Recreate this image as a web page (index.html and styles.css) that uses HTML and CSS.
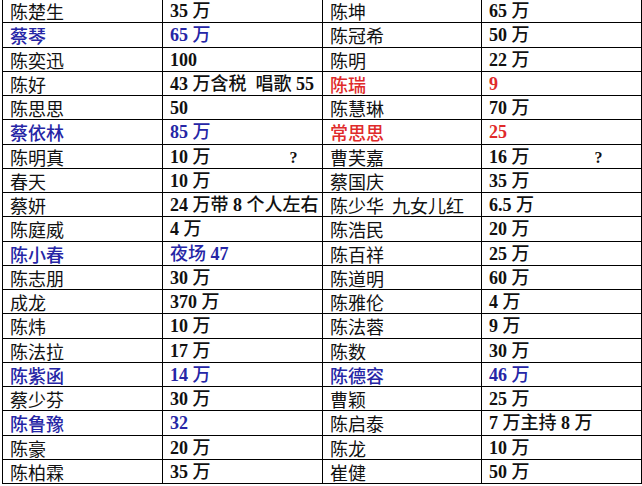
FILE: index.html
```html
<!DOCTYPE html>
<html lang="zh-CN">
<head>
<meta charset="utf-8">
<title>表</title>
<link rel="stylesheet" href="styles.css">
</head>
<body>
<div class="sheet">
  <div class="c n">陈楚生</div><div class="c v">35 <span class="h">万</span></div><div class="c n">陈坤</div><div class="c v">65 <span class="h">万</span></div>
  <div class="c n blue">蔡琴</div><div class="c v blue">65 <span class="h">万</span></div><div class="c n">陈冠希</div><div class="c v">50 <span class="h">万</span></div>
  <div class="c n">陈奕迅</div><div class="c v">100</div><div class="c n">陈明</div><div class="c v">22 <span class="h">万</span></div>
  <div class="c n">陈好</div><div class="c v">43 <span class="h">万含税  唱歌</span> 55</div><div class="c n red">陈瑞</div><div class="c v red">9</div>
  <div class="c n">陈思思</div><div class="c v">50</div><div class="c n">陈慧琳</div><div class="c v">70 <span class="h">万</span></div>
  <div class="c n blue">蔡依林</div><div class="c v blue">85 <span class="h">万</span></div><div class="c n red">常思思</div><div class="c v red">25</div>
  <div class="c n">陈明真</div><div class="c v">10 <span class="h">万</span><span class="q q1">?</span></div><div class="c n">曹芙嘉</div><div class="c v">16 <span class="h">万</span><span class="q q2">?</span></div>
  <div class="c n">春天</div><div class="c v">10 <span class="h">万</span></div><div class="c n">蔡国庆</div><div class="c v">35 <span class="h">万</span></div>
  <div class="c n">蔡妍</div><div class="c v">24 <span class="h">万带</span> 8 <span class="h">个人左右</span></div><div class="c n">陈少华  九女儿红</div><div class="c v">6.5 <span class="h">万</span></div>
  <div class="c n">陈庭威</div><div class="c v">4 <span class="h">万</span></div><div class="c n">陈浩民</div><div class="c v">20 <span class="h">万</span></div>
  <div class="c n blue">陈小春</div><div class="c v blue"><span class="h">夜场</span> 47</div><div class="c n">陈百祥</div><div class="c v">25 <span class="h">万</span></div>
  <div class="c n">陈志朋</div><div class="c v">30 <span class="h">万</span></div><div class="c n">陈道明</div><div class="c v">60 <span class="h">万</span></div>
  <div class="c n">成龙</div><div class="c v">370 <span class="h">万</span></div><div class="c n">陈雅伦</div><div class="c v">4 <span class="h">万</span></div>
  <div class="c n">陈炜</div><div class="c v">10 <span class="h">万</span></div><div class="c n">陈法蓉</div><div class="c v">9 <span class="h">万</span></div>
  <div class="c n">陈法拉</div><div class="c v">17 <span class="h">万</span></div><div class="c n">陈数</div><div class="c v">30 <span class="h">万</span></div>
  <div class="c n blue">陈紫函</div><div class="c v blue">14 <span class="h">万</span></div><div class="c n blue">陈德容</div><div class="c v blue">46 <span class="h">万</span></div>
  <div class="c n">蔡少芬</div><div class="c v">30 <span class="h">万</span></div><div class="c n">曹颖</div><div class="c v">25 <span class="h">万</span></div>
  <div class="c n blue">陈鲁豫</div><div class="c v blue">32</div><div class="c n">陈启泰</div><div class="c v">7 <span class="h">万主持</span> 8 <span class="h">万</span></div>
  <div class="c n">陈豪</div><div class="c v">20 <span class="h">万</span></div><div class="c n">陈龙</div><div class="c v">10 <span class="h">万</span></div>
  <div class="c n">陈柏霖</div><div class="c v">35 <span class="h">万</span></div><div class="c n">崔健</div><div class="c v">50 <span class="h">万</span></div>
</div>
</body>
</html>
```
FILE: styles.css
```css
html, body {
  margin: 0;
  padding: 0;
  background: #ffffff;
  overflow: hidden;
}
.sheet {
  margin: 0 0 0 2px;
  display: grid;
  grid-template-columns: 160px 160px 159px 160px;
  grid-template-rows: 23.25px repeat(19, 24.25px);
  border-left: 1px solid #000;
  width: max-content;
}
.c {
  box-sizing: border-box;
  border-right: 1px solid #000;
  border-bottom: 1px solid #000;
  padding: 1px 0 0 7px;
  font-size: 18px;
  line-height: 22px;
  white-space: pre;
  color: #111;
}
.c:nth-child(-n+4) {
  padding-top: 0;
}
.n {
  font-family: "Noto Sans CJK SC", "Liberation Sans", sans-serif;
  font-weight: 400;
}
.v {
  font-family: "Liberation Serif", "Noto Sans CJK SC", serif;
  font-weight: 700;
}
.h {
  font-weight: 500;
}
.n.blue, .n.red {
  font-weight: 500;
}
.blue { color: #2626a6; }
.red { color: #e02a2a; }
.q {
  display: inline-block;
  font-size: 16px;
}
.q1 { margin-left: 79px; }
.q2 { margin-left: 65px; }
```
